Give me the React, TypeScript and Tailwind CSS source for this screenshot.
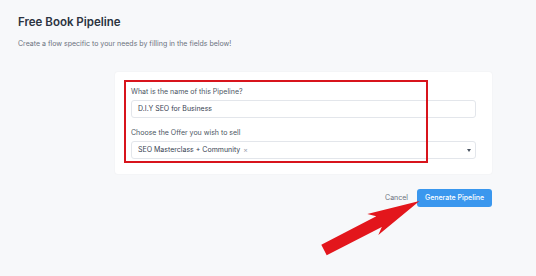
import React from 'react';

const Arrow = () => (
  <svg className="absolute left-0 top-0 pointer-events-none" width="536" height="276" viewBox="0 0 536 276">
    <polygon
      points="321.3,244.7 376.3,216.3 367.3,214.1 419.5,201 378.3,235.1 381.8,227 326.7,255.3"
      fill="#e3161c"
    />
  </svg>
);

const App: React.FC = () => {
  return (
    <div className="relative w-[536px] h-[276px] bg-[#f7f8fa] overflow-hidden font-['Inter',sans-serif]">
      <div className="pl-[18px] pt-[14px]">
        <h1 className="text-[11.5px] leading-[16px] font-semibold text-[#2b3340]">Free Book Pipeline</h1>
        <p className="mt-[9px] text-[7px] leading-[10px] text-[#6b7280]">
          Create a flow specific to your needs by filling in the fields below!
        </p>
      </div>

      <div className="ml-[115px] mt-[23px] w-[377px] bg-white rounded-[3px] shadow-[0_0_2px_rgba(0,0,0,0.06)] px-[16px] pt-[15px] pb-[15px] flex flex-col">
        <label className="text-[7px] leading-[10px] text-[#4b5563]">What is the name of this Pipeline?</label>
        <div className="mt-[3px] h-[18px] border border-[#e3e6eb] rounded-[3px] flex items-center px-[6px] text-[7px] text-[#374151]">
          D.I.Y SEO for Business
        </div>
        <label className="mt-[10px] text-[7px] leading-[10px] text-[#4b5563]">Choose the Offer you wish to sell</label>
        <div className="mt-[3px] h-[18px] border border-[#e3e6eb] rounded-[3px] flex items-center pl-[6px] pr-[4px] text-[7px] text-[#374151]">
          <span>SEO Masterclass + Community</span>
          <span className="ml-[3px] text-[#9ca3af] text-[7px]">×</span>
          <span className="ml-auto w-0 h-0 border-l-[2.5px] border-r-[2.5px] border-t-[3px] border-l-transparent border-r-transparent border-t-[#4b5563]" />
        </div>
      </div>

      <div className="w-[492px] mt-[15px] flex justify-end items-center gap-[9px]">
        <button className="text-[7px] text-[#6b7280]">Cancel</button>
        <button className="h-[18px] w-[75px] rounded-[3px] bg-[#3a97ee] text-white text-[7px] font-medium">Generate Pipeline</button>
      </div>

      <div className="absolute left-[124px] top-[80px] w-[304px] h-[83px] border-2 border-[#d8141c] pointer-events-none" />
      <Arrow />
    </div>
  );
};

export default App;
